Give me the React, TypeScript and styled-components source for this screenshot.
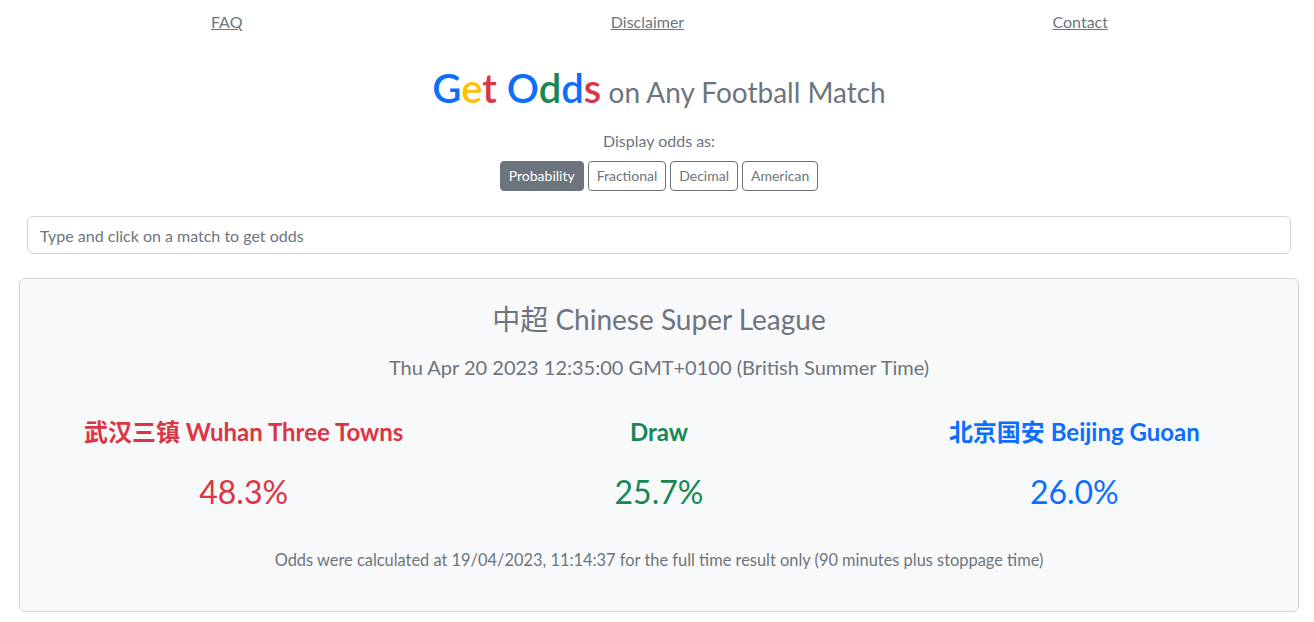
import React from 'react';
import styled, { createGlobalStyle } from 'styled-components';

const GlobalStyle = createGlobalStyle`
  body {
    margin: 0;
    background: #fff;
    font-family: Lato, "Noto Sans CJK SC", sans-serif;
    color: #6c757d;
  }
`;

const Page = styled.div`
  display: flex;
  flex-direction: column;
  padding: 0 15px 0 19px;
`;

const Nav = styled.nav`
  display: flex;
  justify-content: space-between;
  padding: 10px 191px 0 192px;
  height: 24px;
`;

const NavLink = styled.a`
  color: #6c757d;
  font-size: 16px;
  line-height: 24px;
  text-decoration: underline;
`;

const Title = styled.h1`
  margin: 34px 0 0;
  text-align: center;
  font-weight: 400;
  font-size: 28px;
  line-height: 40px;
`;

const Brand = styled.span`
  font-size: 40px;
  font-weight: 600;
`;

const Letter = styled.span<{ $c: string }>`
  color: ${p => p.$c};
`;

const Label = styled.div`
  margin-top: 17px;
  text-align: center;
  font-size: 16px;
  line-height: 24px;
`;

const ButtonGroup = styled.div`
  display: flex;
  justify-content: center;
  gap: 4px;
  margin-top: 8px;
`;

const OddsButton = styled.button<{ $active?: boolean }>`
  font-family: inherit;
  font-size: 14px;
  line-height: 20px;
  padding: 4px 8px;
  border-radius: 4px;
  border: 1px solid #6c757d;
  background: ${p => (p.$active ? '#6c757d' : '#fff')};
  color: ${p => (p.$active ? '#fff' : '#6c757d')};
`;

const Search = styled.input`
  margin: 25px 8px 0;
  height: 38px;
  box-sizing: border-box;
  padding: 6px 12px;
  font-family: inherit;
  font-size: 16px;
  border: 1px solid #ced4da;
  border-radius: 6px;
  color: #212529;
  &::placeholder {
    color: #6c757d;
  }
`;

const Card = styled.section`
  margin-top: 24px;
  background: #f8f9fa;
  border: 1px solid #d3d4d5;
  border-radius: 6px;
  padding: 16px 16px 39px;
  text-align: center;
`;

const League = styled.h2`
  margin: 6px 0 0;
  font-weight: 400;
  font-size: 28px;
  line-height: 36px;
`;

const Kickoff = styled.div`
  margin-top: 16px;
  font-size: 20px;
  line-height: 28px;
`;

const Grid = styled.div`
  display: grid;
  grid-template-columns: repeat(3, 1fr);
  margin-top: 34px;
`;

const Outcome = styled.div<{ $c: string }>`
  color: ${p => p.$c};
  display: flex;
  flex-direction: column;
  align-items: center;
`;

const Team = styled.div`
  font-weight: 700;
  font-size: 24px;
  line-height: 34px;
`;

const Pct = styled.div`
  margin-top: 23px;
  font-size: 32px;
  line-height: 40px;
`;

const Note = styled.p`
  margin: 36px 0 0;
  font-size: 16.4px;
  line-height: 24px;
`;

const outcomes = [
  { team: '武汉三镇 Wuhan Three Towns', pct: '48.3%', color: '#dc3545' },
  { team: 'Draw', pct: '25.7%', color: '#198754' },
  { team: '北京国安 Beijing Guoan', pct: '26.0%', color: '#0d6efd' },
];

const brand: [string, string][] = [
  ['G', '#0d6efd'], ['e', '#ffc107'], ['t', '#dc3545'], [' ', '#000'],
  ['O', '#0d6efd'], ['d', '#198754'], ['d', '#0d6efd'], ['s', '#dc3545'],
];

const App: React.FC = () => {
  return (
    <>
      <GlobalStyle />
      <Page>
        <Nav>
          <NavLink href="#">FAQ</NavLink>
          <NavLink href="#">Disclaimer</NavLink>
          <NavLink href="#">Contact</NavLink>
        </Nav>
        <Title>
          <Brand>
            {brand.map(([ch, c], i) => (
              <Letter key={i} $c={c}>{ch}</Letter>
            ))}
          </Brand>{' '}
          on Any Football Match
        </Title>
        <Label>Display odds as:</Label>
        <ButtonGroup>
          <OddsButton $active>Probability</OddsButton>
          <OddsButton>Fractional</OddsButton>
          <OddsButton>Decimal</OddsButton>
          <OddsButton>American</OddsButton>
        </ButtonGroup>
        <Search placeholder="Type and click on a match to get odds" />
        <Card>
          <League>中超 Chinese Super League</League>
          <Kickoff>Thu Apr 20 2023 12:35:00 GMT+0100 (British Summer Time)</Kickoff>
          <Grid>
            {outcomes.map(o => (
              <Outcome key={o.team} $c={o.color}>
                <Team>{o.team}</Team>
                <Pct>{o.pct}</Pct>
              </Outcome>
            ))}
          </Grid>
          <Note>
            Odds were calculated at 19/04/2023, 11:14:37 for the full time result only (90 minutes plus stoppage time)
          </Note>
        </Card>
      </Page>
    </>
  );
};

export default App;
